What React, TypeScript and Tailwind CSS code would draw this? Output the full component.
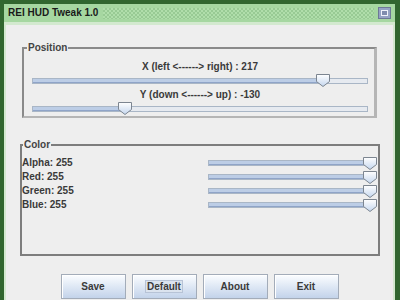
import type { ReactNode } from "react";

const font = { fontFamily: '"Liberation Sans", Arial, sans-serif' };

function Thumb() {
  return (
    <svg width="14" height="13" viewBox="0 0 14 13" className="block">
      <defs>
        <linearGradient id="thumbFill" x1="0" y1="0" x2="0" y2="1">
          <stop offset="0" stopColor="#ffffff" />
          <stop offset="1" stopColor="#c4d6ee" />
        </linearGradient>
      </defs>
      <path
        d="M0.5 0.5 H13.5 V7.5 L7 12.5 L0.5 7.5 Z"
        fill="url(#thumbFill)"
        stroke="#7c8590"
      />
    </svg>
  );
}

function Slider({ pct }: { pct: number }) {
  return (
    <div className="relative h-[13px] flex items-center">
      <div className="relative w-full h-[6px] border border-[#a9b6c6] bg-[#e6eaf0]">
        <div
          className="h-full border-b border-[#8fa4c8] bg-[#bccde6]"
          style={{ width: `${pct}%` }}
        />
      </div>
      <div
        className="absolute top-0 -translate-x-1/2"
        style={{ left: `${pct}%` }}
      >
        <Thumb />
      </div>
    </div>
  );
}

function Group({
  title,
  className,
  legendClass,
  children,
}: {
  title: string;
  className: string;
  legendClass: string;
  children: ReactNode;
}) {
  return (
    <fieldset className={className}>
      <legend className={legendClass}>{title}</legend>
      {children}
    </fieldset>
  );
}

function Btn({ label, focused }: { label: string; focused?: boolean }) {
  return (
    <button className="w-[65px] h-[25px] border border-[#a3acb9] bg-gradient-to-b from-[#fbfdff] to-[#c3d3ea] shadow-[inset_1px_1px_0_#ffffff] flex items-center justify-center text-[10px] font-bold text-[#3a3a3a]">
      {focused ? (
        <span className="border border-[#b7c3d6] bg-[#dbe3ee] px-[1px] leading-[11px]">
          {label}
        </span>
      ) : (
        label
      )}
    </button>
  );
}

const colors = [
  { name: "Alpha", value: 255 },
  { name: "Red", value: 255 },
  { name: "Green", value: 255 },
  { name: "Blue", value: 255 },
];

export default function App() {
  return (
    <div
      className="w-[400px] h-[300px] overflow-hidden bg-[#31662f] pl-[4px] pt-[4px] pr-[5px]"
      style={font}
    >
      <div className="h-full flex flex-col bg-[#d3e9cf]">
        {/* Title bar */}
        <div className="h-[18px] flex items-center bg-[#a6d7a1] pl-[4px] pr-[4px]">
          <span className="text-[10px] font-bold text-[#1a1a1a] leading-none whitespace-nowrap">
            REI HUD Tweak 1.0
          </span>
          <div className="flex-1 h-[11px] ml-[5px] mr-[4px] bg-[repeating-conic-gradient(#98ca94_0_25%,#b0deab_0_50%)] bg-[length:4px_4px]" />
          <div className="w-[13px] h-[12px] border border-[#6d7896] bg-[#95a3c4] flex items-center justify-center">
            <div className="w-[7px] h-[6px] border border-[#eef2fa] bg-[#7f8cae]" />
          </div>
        </div>
        <div className="h-[3px]" />

        {/* Content */}
        <div className="flex-1 mx-[2px] bg-[#eeeeee] flex flex-col text-[#3a3a3a]">
          <Group
            title="Position"
            className="ml-[16px] mt-[18px] w-[355px] border-t-2 border-l-2 border-[#8a8a8a] border-r-[3px] border-r-[#b5b5b5] border-b-2 border-b-[#b5b5b5] pb-[1px]"
            legendClass="ml-[3px] px-[1px] text-[10px] font-bold leading-[10px] text-[#444444]"
          >
            <div className="pl-[8px] pr-[6px]">
              <div className="mt-[8px] h-[12px] leading-[12px] text-[10px] font-bold text-center">
                X (left &lt;------&gt; right) : 217
              </div>
              <div className="mt-[1px]">
                <Slider pct={86.6} />
              </div>
              <div className="mt-[2px] h-[12px] leading-[12px] text-[10px] font-bold text-center">
                Y (down &lt;------&gt; up) : -130
              </div>
              <div className="mt-[1px]">
                <Slider pct={27.7} />
              </div>
            </div>
          </Group>

          <Group
            title="Color"
            className="ml-[14px] mt-[22px] w-[360px] h-[116px] border-2 border-[#7d7d7d]"
            legendClass="ml-[1px] px-[1px] text-[10px] font-bold leading-[10px] text-[#444444]"
          >
            <div className="mt-[6px] flex flex-col">
              {colors.map((c) => (
                <div key={c.name} className="h-[14px] flex items-center">
                  <span className="w-[186px] text-[10px] font-bold leading-[14px]">
                    {c.name}: {c.value}
                  </span>
                  <div className="w-[162px]">
                    <Slider pct={(c.value / 255) * 100} />
                  </div>
                </div>
              ))}
            </div>
          </Group>

          <div className="mt-[18px] flex justify-center gap-[6px]">
            <Btn label="Save" />
            <Btn label="Default" focused />
            <Btn label="About" />
            <Btn label="Exit" />
          </div>
        </div>
      </div>
    </div>
  );
}
